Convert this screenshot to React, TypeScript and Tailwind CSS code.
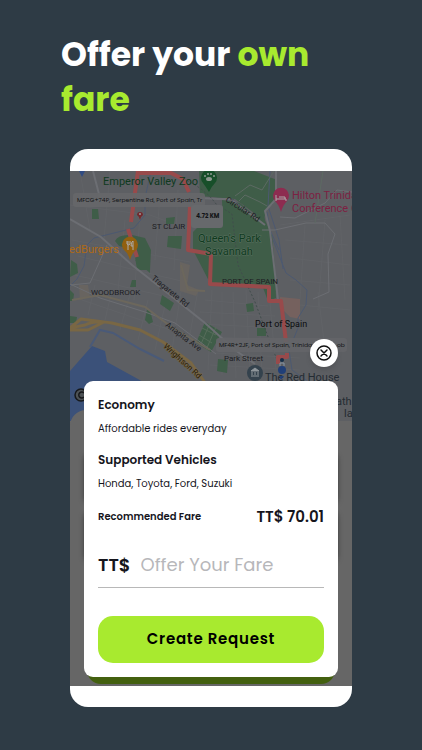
import React from "react";

const ui = "font-[Poppins,Inter,sans-serif]";

function CityMap() {
  return (
    <svg
      viewBox="70 171 282 250"
      preserveAspectRatio="xMidYMin slice"
      className="absolute inset-x-0 top-0 h-[250px] w-full font-[Roboto,sans-serif]"
      role="img"
      aria-label="Map of Port of Spain"
    >
      <rect x="0" y="171" width="422" height="250" fill="#5d5f63" />
      {/* minor street grid */}
      <g stroke="#616367" strokeWidth="1" fill="none">
        <path d="M70 205L150 215L190 230M80 171L90 230M110 171L104 240M125 220L118 290M140 215L134 300M160 195L155 260M178 190L174 270M72 240L190 262M78 256L185 282M75 275L180 300M82 300L200 340M95 285L88 315M112 290L105 320M130 294L120 330M148 300L138 340M165 305L155 350M182 285L172 350M198 290L188 345" />
        <path d="M212 290L208 370M222 292L222 375M233 292L236 378M246 290L250 375M258 292L262 375M270 303L276 370M205 300L268 306M200 312L275 316M200 324L280 328M205 337L290 340M215 353L300 358M210 365L300 370" />
        <path d="M280 225L350 215M285 240L348 245M290 258L350 265M305 225L300 300M325 220L318 310M340 215L345 300M290 280L350 285M300 305L350 310M318 292L325 350" />
      </g>
      {/* parks */}
      <g fill="#3f5d48">
        <path d="M199 171H254L277 180L273 204Q263 209 265 221L235 199L200 196Z" />
        <path d="M197 228L222 221L262 214L272 235L275 268L276 298L268 301L262 285L210 283L193 250V232Z" />
        <path d="M222 200L240 203L264 224L268 240H215V228H223Z" />
        <path d="M115 241Q118 234 132 235L145 238L151 250L150 270H137L134 250L119 246Z" />
        <path d="M168 236H182L181 249L167 247ZM166 218L175 217L174 224H166ZM92 209H98L99 219H92ZM135 260H150V273L143 267ZM71 260L77 264L78 273L70 277ZM70 290L74 294L73 301H70ZM70 316L77 317L76 323H70ZM147 310L150 310L153 322L149 324L145 320ZM162 295L174 303L170 311L160 304ZM205 322L222 332L211 352L196 343ZM218 359L228 360L227 373L217 371ZM132 280H136V287H130Z" />
        <path d="M257 328h9v8h-9zM246 304l7-1 1 8-7 1z" />
      </g>
      <g stroke="#566c5a" strokeWidth="1">
        <path d="M202 328L216 335M199 335L212 343M210 323L201 344M216 327L206 350" />
      </g>
      <path d="M280 297L300 299V319L290 317L280 307Z" fill="#75615e" />
      <path d="M79 285h9l2 12-10 3zM180 262l10 3-3 20 12 5-3 6-16-5z" fill="#686460" />
      {/* sea */}
      <path d="M70 371L92 346L105 351L107 362L147 384V421H70Z" fill="#3b5179" />
      <path d="M90 347L100 330L113 333L140 349L164 361" fill="none" stroke="#4a5a78" strokeWidth="2" />
      <path d="M70 286L77 279L84 266L87 245L94 238L134 228L145 215V198L151 171M270 171L268 206L279 240L283 269M273 240L286 273L296 280L307 290L306 305L298 318V328L289 350L292 370L316 387M267 212L270 230L279 250" fill="none" stroke="#4c5971" strokeWidth="1" />
      {/* roads */}
      <g fill="none" stroke="#6c6e73" strokeWidth="2">
        <path d="M70 219L101 237L132 265L165 291L205 323L235 350L255 364M93 171L100 198M276 171V199L265 211L270 231L278 300M200 198L218 199L230 199L265 225" />
        <path d="M70 284L100 298L145 312L175 323L216 354M262 230H275L306 223L325 223L335 234L328 254L329 292L313 299M280 217L295 218L325 203L337 190L352 192M71 285L90 283L107 245" strokeWidth="1" />
        <path d="M235 196L250 185L262 190L274 171M239 201L245 195L260 202L267 206M315 223L323 171" stroke="#5d6a63" strokeWidth="1" />
      </g>
      <g stroke="#6c675c" fill="none" strokeWidth="2">
        <path d="M72 300L100 295L145 307L170 326L210 350" />
        <path d="M181 265L188 290L205 291" />
      </g>
      <path d="M70 328L85 325Q95 320 112 323L140 330L163 342L191 363L206 384M70 330L88 330L104 322L81 319L70 328" fill="none" stroke="#796744" strokeWidth="3" strokeLinejoin="round" />
      <path d="M165 171Q202 184 216 204L232 214L238 265L255 302L270 342L279 365" stroke="#414d4c" strokeWidth="1" strokeDasharray="2 2" fill="none" />
      {/* route */}
      <path d="M137 257L128 229M131 222L138 171M138 173H171L183 179L189 192M190 206L188 250L211 254L210 284L269 287L269 301L281 301L286 342M287 353V357H278V364" fill="none" stroke="#984a4b" strokeWidth="4" strokeLinejoin="round" />
      <path d="M79 171h6l-3 6z" fill="#304b82" />
      {/* address pills */}
      <rect x="73" y="193" width="132" height="14" rx="3" fill="#666769" fillOpacity=".9" />
      <rect x="216" y="338" width="131" height="14" rx="3" fill="#646568" fillOpacity=".9" />
      <rect x="191" y="205" width="32" height="23" rx="3" fill="#67696c" />
      <g fill="#121416" className="font-[Poppins,Inter,sans-serif]">
        <text x="77" y="202" fontSize="6">MFCG+74P, Serpentine Rd, Port of Spain, Tr</text>
        <text x="219" y="347" fontSize="6">MF4R+2JF, Port of Spain, Trinidad</text>
        <text x="337" y="347" fontSize="6">ob</text>
        <text x="196" y="218" fontSize="6" fontWeight="700">4.72 KM</text>
      </g>
      {/* place names */}
      <g fill="#1d2023">
        <text x="152" y="229" fontSize="8">ST CLAIR</text>
        <text x="91" y="295" fontSize="8">WOODBROOK</text>
        <text x="222" y="284" fontSize="8">PORT OF SPAIN</text>
        <text x="255" y="327" fontSize="9" fill="#0c0d0f">Port of Spain</text>
        <text x="224" y="361" fontSize="8">Park Street</text>
        <text transform="translate(225 201) rotate(33)" fontSize="8">Circular Rd</text>
        <text transform="translate(151 279) rotate(39)" fontSize="8">Tragarete Rd</text>
        <text transform="translate(165 326) rotate(37)" fontSize="8">Ariapita Ave</text>
        <text transform="translate(163 347) rotate(42)" fontSize="8" fill="#241a0d" stroke="#796744" strokeWidth="1" paintOrder="stroke">Wrightson Rd</text>
        <text x="265" y="381" fontSize="11" fill="#242b32">The Red House</text>
        <text x="336" y="405" fontSize="11" fill="#242b32">ath</text>
        <text x="344" y="417" fontSize="11" fill="#242b32">la</text>
      </g>
      <g fill="#0f3a1e" fontSize="11">
        <text x="103" y="185">Emperor Valley Zoo</text>
        <text x="198" y="242" stroke="#58705f" strokeWidth="1" paintOrder="stroke">Queen&apos;s Park</text>
        <text x="205" y="255" stroke="#58705f" strokeWidth="1" paintOrder="stroke">Savannah</text>
      </g>
      <text x="69" y="253" fontSize="11" fill="#b06a14">edBurgers</text>
      <g fill="#7d2142" fontSize="11">
        <text x="292" y="199">Hilton Trinidad</text>
        <text x="292" y="212">Conference Centre</text>
      </g>
      {/* pins */}
      <path d="M209 192Q206 187 203 183A8 8 0 1 1 215 183Q211 187 209 192Z" fill="#174f29" />
      <g fill="#8d9990"><ellipse cx="209" cy="179" rx="3" ry="2" /><circle cx="205" cy="176" r="1" /><circle cx="208" cy="174" r="1" /><circle cx="211" cy="174" r="1" /><circle cx="214" cy="176" r="1" /></g>
      <path d="M281 212Q279 205 275 201A8 8 0 1 1 287 201Q283 205 281 212Z" fill="#8d2c50" />
      <path d="M276 201V195M276 199H286V201M279 197H285V199" stroke="#aaa" strokeWidth="1" fill="none" />
      <path d="M130 260Q128 253 124 250A8 8 0 1 1 136 250Q132 253 130 260Z" fill="#92600f" />
      <path d="M127 241V244Q129 246 130 244V241M128 241V250M133 250V241Q131 242 131 246H133" stroke="#aaa" fill="none" />
      <path d="M140 220Q139 216 137 215A3 3 0 1 1 143 215Q140 217 140 220Z" fill="#74282c" />
      <circle cx="140" cy="214" r="1" fill="#999" />
      <circle cx="255" cy="373" r="8" fill="#34424d" />
      <path d="M251 371L255 368L259 371ZM251 376H259M252 372V375M255 372V375M258 372V375" fill="#8f969b" stroke="#8f969b" strokeWidth="1" />
      <circle cx="282" cy="360" r="2" fill="#152f49" />
      <path d="M280 366v-3h4v3" stroke="#8795a5" fill="none" />
      <circle cx="282" cy="370" r="4" fill="#203f78" />
      <path d="M279 376h5l-3 4z" fill="#203f78" />
      <circle cx="81" cy="395" r="6" fill="#4d5255" stroke="#17191c" strokeWidth="1.5" />
      <path d="M84 393A3 3 0 1 0 84 397" stroke="#17191c" strokeWidth="1.5" fill="none" />
    </svg>
  );
}

export default function App() {
  return (
    <main className={`min-h-screen bg-[#2e3b45] pb-[43px] ${ui}`}>
      <h1 className="px-[61px] pt-8 text-[33px] leading-[45px] font-bold text-white">
        Offer your <span className="text-[#a8ea2f]">own fare</span>
      </h1>

      <div className="mx-[70px] mt-[27px] overflow-hidden rounded-[18px] bg-white pt-[22px] pb-[21px]">
        <section className="relative isolate overflow-hidden bg-[#666666] px-[14px] pt-[168px] pb-[9px]">
          <div className="absolute inset-0 -z-10">
            <CityMap />
            <div className="absolute inset-x-0 top-[239px] bottom-0 -z-10 rounded-t-[16px] bg-[#666666]" />
            <div className="absolute inset-x-0 top-[250px] bottom-0 bg-[#666666]" />
            <div className="absolute top-[239px] bottom-0 left-0 w-10 rounded-tl-[16px] bg-[#666666]" />
            <div className="absolute inset-x-[14px] top-[279px]">
              <div className="h-[50px] rounded-md shadow-md shadow-black/40" />
              <div className="mt-2 h-[50px] rounded-md shadow-md shadow-black/40" />
            </div>
            <div className="absolute inset-x-[17px] bottom-[2px] h-11 rounded-[14px] bg-[#43600f]" />
          </div>

          <div className="flex justify-end">
            <button
              type="button"
              aria-label="Close"
              className="flex size-7 items-center justify-center rounded-full bg-white shadow-md"
            >
              <svg viewBox="0 0 18 18" className="size-[18px]" fill="none" stroke="#111" strokeWidth="1.5" strokeLinecap="round">
                <circle cx="9" cy="9" r="7" />
                <path d="M6 6L12 12M12 6L6 12" />
              </svg>
            </button>
          </div>

          <form
            onSubmit={(e) => e.preventDefault()}
            className="mt-[14px] rounded-[9px] bg-white px-[14px] pt-[14px] pb-[14px] text-[#15151c]"
          >
            <h2 className="text-xs leading-5 font-semibold">Economy</h2>
            <p className="mt-1 text-[10px] leading-5">Affordable rides everyday</p>
            <h2 className="mt-[11px] text-xs leading-5 font-semibold">Supported Vehicles</h2>
            <p className="mt-1 text-[10px] leading-5">Honda, Toyota, Ford, Suzuki</p>
            <div className="mt-[11px] flex items-center justify-between leading-6 font-semibold whitespace-nowrap">
              <span className="text-[10px]">Recommended Fare</span>
              <span className="text-[15px]">TT$ 70.01</span>
            </div>
            <div className="mt-[25px] flex h-[34px] items-center gap-[10px] border-b border-[#b8b8b8] pb-[11px]">
              <label htmlFor="fare" className="text-[18px] leading-[22px] font-semibold">TT$</label>
              <input
                id="fare"
                inputMode="decimal"
                placeholder="Offer Your Fare"
                className="h-[22px] min-w-0 flex-1 text-[18px] leading-[22px] outline-none placeholder:text-[#b7b7ba]"
              />
            </div>
            <button
              type="submit"
              className="mt-7 h-[47px] w-full rounded-[15px] bg-[#a8ea2f] text-[15px] font-semibold tracking-wider text-black"
            >
              Create Request
            </button>
          </form>
        </section>
      </div>
    </main>
  );
}
